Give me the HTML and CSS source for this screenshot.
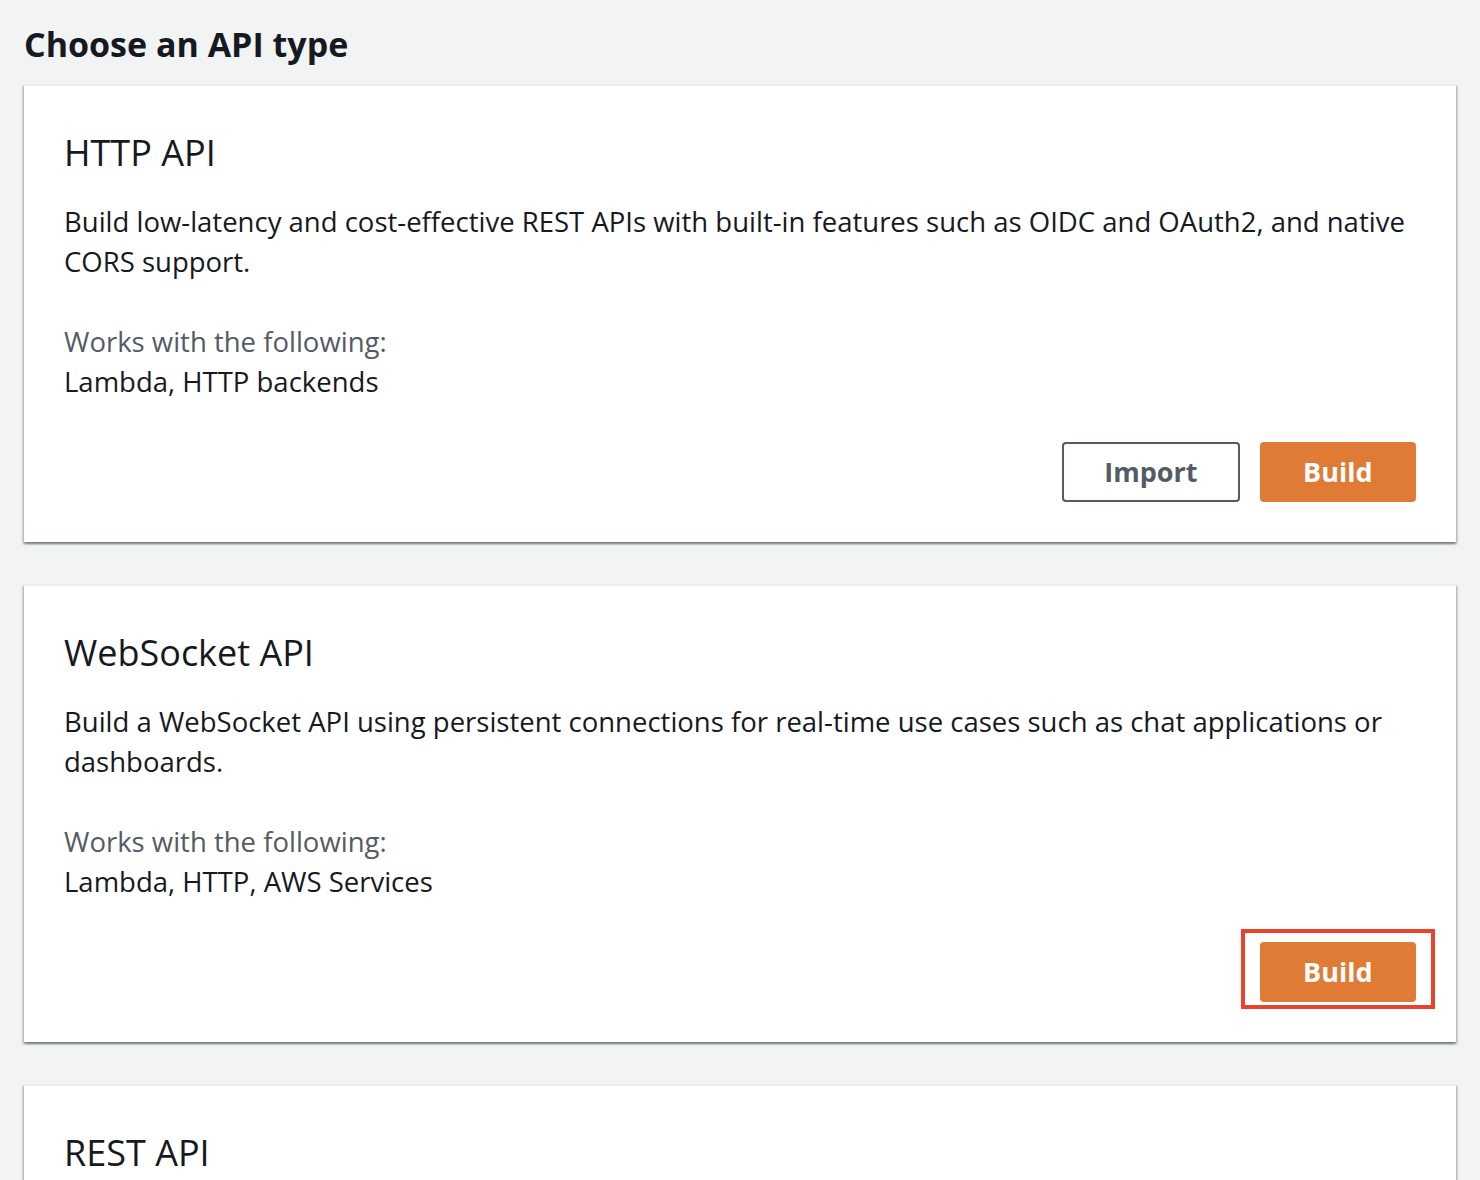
FILE: index.html
```html
<!DOCTYPE html>
<html lang="en">
<head>
<meta charset="utf-8">
<title>Choose an API type</title>
<link rel="stylesheet" href="styles.css">
</head>
<body>
<main class="page">
  <h1 class="page-title">Choose an API type</h1>

  <section class="card">
    <h2 class="card-title">HTTP API</h2>
    <p class="card-desc">Build low-latency and cost-effective REST APIs with built-in features such as OIDC and OAuth2, and native CORS support.</p>
    <div class="works">
      <div class="works-label">Works with the following:</div>
      <div class="works-value">Lambda, HTTP backends</div>
    </div>
    <div class="actions">
      <button class="btn btn-normal">Import</button>
      <button class="btn btn-primary">Build</button>
    </div>
  </section>

  <section class="card">
    <h2 class="card-title">WebSocket API</h2>
    <p class="card-desc">Build a WebSocket API using persistent connections for real-time use cases such as chat applications or dashboards.</p>
    <div class="works">
      <div class="works-label">Works with the following:</div>
      <div class="works-value">Lambda, HTTP, AWS Services</div>
    </div>
    <div class="actions">
      <button class="btn btn-primary">Build<span class="highlight"></span></button>
    </div>
  </section>

  <section class="card card-last">
    <h2 class="card-title">REST API</h2>
  </section>
</main>
</body>
</html>
```
FILE: styles.css
```css
html, body {
  margin: 0;
  padding: 0;
}
body {
  background: #f2f3f3;
  font-family: "Open Sans", "Noto Sans", sans-serif;
  color: #16191f;
}
.page {
  padding: 24px 24px 40px 24px;
  display: flex;
  flex-direction: column;
  gap: 42px;
}
.page-title {
  margin: 0 0 -22px 0;
  font-size: 34px;
  line-height: 40px;
  font-weight: 700;
  color: #16191f;
}
.card {
  background: #ffffff;
  border-top: 2px solid #eaeded;
  box-shadow: 0 2px 2px 0 rgba(0, 28, 36, 0.38), 2px 2px 2px 0 rgba(0, 28, 36, 0.14), -2px 2px 2px 0 rgba(0, 28, 36, 0.14);
  padding: 43px 40px 40px 40px;
  display: flex;
  flex-direction: column;
}
.card-last {
  min-height: 340px;
}
.card-title {
  margin: 0 0 25px 0;
  font-size: 36px;
  line-height: 48px;
  font-weight: 400;
  color: #16191f;
}
.card-desc {
  margin: 0 0 40px 0;
  font-size: 27.5px;
  line-height: 40px;
  color: #16191f;
}
.works {
  font-size: 27.5px;
  line-height: 40px;
  margin-bottom: 40px;
}
.works-label {
  color: #545b64;
}
.works-value {
  color: #16191f;
}
.actions {
  display: flex;
  justify-content: flex-end;
  gap: 20px;
}
.btn {
  position: relative;
  height: 60px;
  padding: 0 41.5px;
  border-radius: 4px;
  font-family: "Open Sans", "Noto Sans", sans-serif;
  font-size: 27px;
  font-weight: 700;
  line-height: 56px;
  cursor: pointer;
}
.btn-normal {
  padding: 0 40px;
  background: #ffffff;
  color: #545b64;
  border: 2px solid #545b64;
}
.btn-primary {
  background: #df7b34;
  color: #ffffff;
  border: 2px solid #df7b34;
}
.highlight {
  position: absolute;
  left: -21px;
  right: -21px;
  top: -15px;
  bottom: -9px;
  border: 4px solid #e9432b;
  pointer-events: none;
}
```
